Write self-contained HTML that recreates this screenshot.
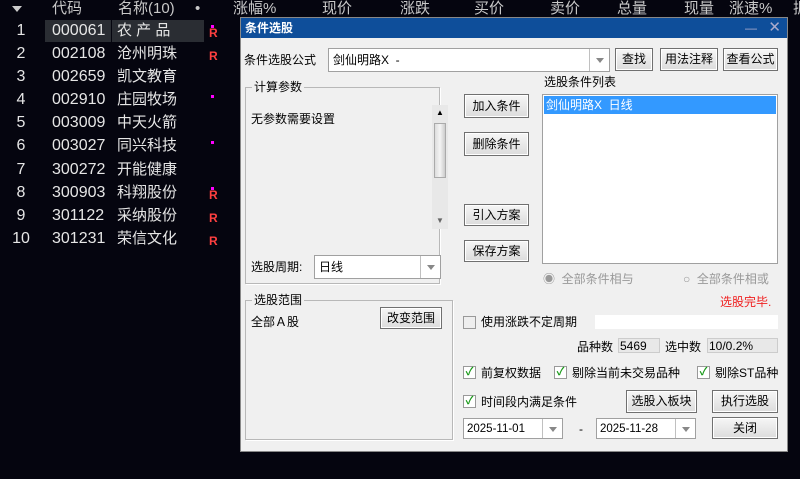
<!DOCTYPE html>
<html><head><meta charset="utf-8"><style>
*{margin:0;padding:0;box-sizing:border-box}
body{width:800px;height:479px;background:#05050f;position:relative;overflow:hidden;font-family:"Liberation Sans","Noto Sans CJK SC",sans-serif;font-size:12px}
.a{position:absolute;white-space:nowrap}
.h{color:#c8c8c8;font-size:15px;top:0;line-height:17px}
.r{color:#e6e6e6;font-size:16px;line-height:23.1px}
.n{color:#e6e6e6;font-size:15px;line-height:23.1px}
.R{color:#ff4040;font-weight:bold;font-size:12px}
.dlg{position:absolute;left:240px;top:17px;width:548px;height:435px;background:#f0f0f0;border:1px solid #888}
.tb{position:absolute;left:0;top:0;width:100%;height:20px;background:#0e4e9a;color:#fff;font-weight:bold;font-size:12px;line-height:20px;padding-left:4px}
.d{position:absolute;white-space:nowrap;color:#000;font-size:12px;line-height:14px}
.btn{position:absolute;border:1px solid #707070;background:linear-gradient(#f6f6f6,#dcdcdc);font-size:12px;text-align:center;color:#000;box-shadow:inset 0 0 0 1px #fff}
.box{position:absolute;background:#fff;border:1px solid #a0a0a0}
.grp{position:absolute;border:1px solid #b8b8b8;box-shadow:1px 1px 0 #fff}
.lg{position:absolute;top:-8px;left:6px;background:#f0f0f0;padding:0 2px;font-size:12px;line-height:14px}
.dd{position:absolute;right:0;top:0;bottom:0;width:20px;border-left:1px solid #c0c0c0}
.dd:after{content:"";position:absolute;left:6px;top:50%;margin-top:-2px;border:4px solid transparent;border-top:5px solid #888}
.cb{position:absolute;width:13px;height:13px;border:1px solid #999;background:#fff;color:#1a9a1a;font-size:11px;line-height:11px;text-align:center;font-weight:bold}
.dt{font-size:11.5px}
</style></head><body>
<div class="a" style="left:12px;top:6px;border:5px solid transparent;border-top:6px solid #ccc"></div>
<div class="a h" style="left:52px">代码</div>
<div class="a h" style="left:118px">名称(10)</div>
<div class="a h" style="left:195px">•</div>
<div class="a h" style="left:233px">涨幅%</div>
<div class="a h" style="left:322px">现价</div>
<div class="a h" style="left:400px">涨跌</div>
<div class="a h" style="left:474px">买价</div>
<div class="a h" style="left:550px">卖价</div>
<div class="a h" style="left:617px">总量</div>
<div class="a h" style="left:684px">现量</div>
<div class="a h" style="left:729px">涨速%</div>
<div class="a h" style="left:793px">振</div>
<div class="a" style="left:45px;top:20px;width:66px;height:22px;background:#2a2d33"></div>
<div class="a" style="left:112px;top:20px;width:92px;height:22px;background:#2a2d33"></div>
<div class="a r" style="left:0;top:19px;width:42px;text-align:center">1<br>2<br>3<br>4<br>5<br>6<br>7<br>8<br>9<br>10</div>
<div class="a r" style="left:52px;top:19px">000061<br>002108<br>002659<br>002910<br>003009<br>003027<br>300272<br>300903<br>301122<br>301231</div>
<div class="a n" style="left:117px;top:19px">农 产 品<br>沧州明珠<br>凯文教育<br>庄园牧场<br>中天火箭<br>同兴科技<br>开能健康<br>科翔股份<br>采纳股份<br>荣信文化</div>
<div class="a R" style="left:209px;top:26px">R</div>
<div class="a R" style="left:209px;top:49px">R</div>
<div class="a R" style="left:209px;top:188px">R</div>
<div class="a R" style="left:209px;top:211px">R</div>
<div class="a R" style="left:209px;top:234px">R</div>
<div class="a" style="left:211px;top:25px;width:3px;height:3px;background:#f0f"></div>
<div class="a" style="left:211px;top:95px;width:3px;height:3px;background:#f0f"></div>
<div class="a" style="left:211px;top:141px;width:3px;height:3px;background:#f0f"></div>
<div class="a" style="left:211px;top:187px;width:3px;height:3px;background:#f0f"></div>

<div class="dlg">
<div class="tb">条件选股<span style="position:absolute;right:30px;top:0;font-weight:normal;color:#aac">—</span><span style="position:absolute;right:6px;top:0;font-weight:normal;font-size:15px;color:#aac">✕</span></div>
<div class="d" style="left:3px;top:35px">条件选股公式</div>
<div class="box" style="left:87px;top:30px;width:282px;height:24px"><span class="d" style="left:4px;top:4px">剑仙明路X&nbsp;&nbsp;-</span><div class="dd"></div></div>
<div class="btn" style="left:374px;top:30px;width:38px;height:23px;line-height:21px">查找</div>
<div class="btn" style="left:419px;top:30px;width:58px;height:23px;line-height:21px">用法注释</div>
<div class="btn" style="left:482px;top:30px;width:55px;height:23px;line-height:21px">查看公式</div>

<div class="grp" style="left:4px;top:69px;width:195px;height:197px"><div class="lg">计算参数</div></div>
<div class="d" style="left:10px;top:94px">无参数需要设置</div>
<div class="a" style="left:191px;top:87px;width:16px;height:124px;background:#e8e8e8"></div>
<div class="a" style="left:193px;top:105px;width:12px;height:55px;background:linear-gradient(90deg,#ddd,#f4f4f4,#ccc);border:1px solid #aaa"></div>
<div class="d" style="left:195px;top:88px;font-size:8px">▲</div>
<div class="d" style="left:195px;top:196px;font-size:8px;color:#666">▼</div>
<div class="d" style="left:10px;top:242px">选股周期:</div>
<div class="box" style="left:73px;top:237px;width:127px;height:24px"><span class="d" style="left:4px;top:4px">日线</span><div class="dd"></div></div>

<div class="grp" style="left:4px;top:282px;width:208px;height:140px"><div class="lg">选股范围</div></div>
<div class="d" style="left:10px;top:297px">全部Ａ股</div>
<div class="btn" style="left:139px;top:289px;width:62px;height:22px;line-height:20px">改变范围</div>

<div class="btn" style="left:223px;top:76px;width:65px;height:24px;line-height:22px">加入条件</div>
<div class="btn" style="left:223px;top:114px;width:65px;height:24px;line-height:22px">删除条件</div>
<div class="btn" style="left:223px;top:186px;width:65px;height:22px;line-height:20px">引入方案</div>
<div class="btn" style="left:223px;top:222px;width:65px;height:22px;line-height:20px">保存方案</div>

<div class="d" style="left:303px;top:57px">选股条件列表</div>
<div class="box" style="left:301px;top:76px;width:236px;height:170px"><div style="position:absolute;left:1px;top:1px;width:232px;height:18px;background:#3399ff;color:#fff;line-height:18px;padding-left:2px">剑仙明路X&nbsp;&nbsp;日线</div></div>
<div class="d" style="left:302px;top:254px;color:#999">◉&nbsp;&nbsp;全部条件相与</div>
<div class="d" style="left:442px;top:254px;color:#999">○&nbsp;&nbsp;全部条件相或</div>
<div class="d" style="left:479px;top:277px;color:#f02020">选股完毕.</div>

<div class="cb" style="left:222px;top:298px;background:#eee"></div>
<div class="d" style="left:240px;top:297px">使用涨跌不定周期</div>
<div class="a" style="left:354px;top:297px;width:183px;height:14px;background:#fff"></div>
<div class="d" style="left:336px;top:322px">品种数</div>
<div class="a d" style="left:377px;top:320px;width:42px;height:15px;background:#e8e8e8;border:1px solid #ccc;padding-left:1px">5469</div>
<div class="d" style="left:424px;top:322px">选中数</div>
<div class="a d" style="left:466px;top:320px;width:71px;height:15px;background:#e8e8e8;border:1px solid #ccc;padding-left:1px">10/0.2%</div>

<div class="cb" style="left:222px;top:348px">✓</div><div class="d" style="left:240px;top:348px">前复权数据</div>
<div class="cb" style="left:313px;top:348px">✓</div><div class="d" style="left:331px;top:348px">剔除当前未交易品种</div>
<div class="cb" style="left:456px;top:348px">✓</div><div class="d" style="left:474px;top:348px">剔除ST品种</div>
<div class="cb" style="left:222px;top:377px">✓</div><div class="d" style="left:240px;top:377px">时间段内满足条件</div>
<div class="btn" style="left:385px;top:372px;width:71px;height:23px;line-height:21px">选股入板块</div>
<div class="btn" style="left:471px;top:372px;width:66px;height:23px;line-height:21px">执行选股</div>
<div class="box" style="left:222px;top:400px;width:100px;height:21px"><span class="d dt" style="left:3px;top:3px">2025-11-01</span><div class="dd"></div></div>
<div class="d" style="left:338px;top:404px">-</div>
<div class="box" style="left:355px;top:400px;width:100px;height:21px"><span class="d dt" style="left:3px;top:3px">2025-11-28</span><div class="dd"></div></div>
<div class="btn" style="left:471px;top:399px;width:66px;height:22px;line-height:20px">关闭</div>
</div>
</body></html>
